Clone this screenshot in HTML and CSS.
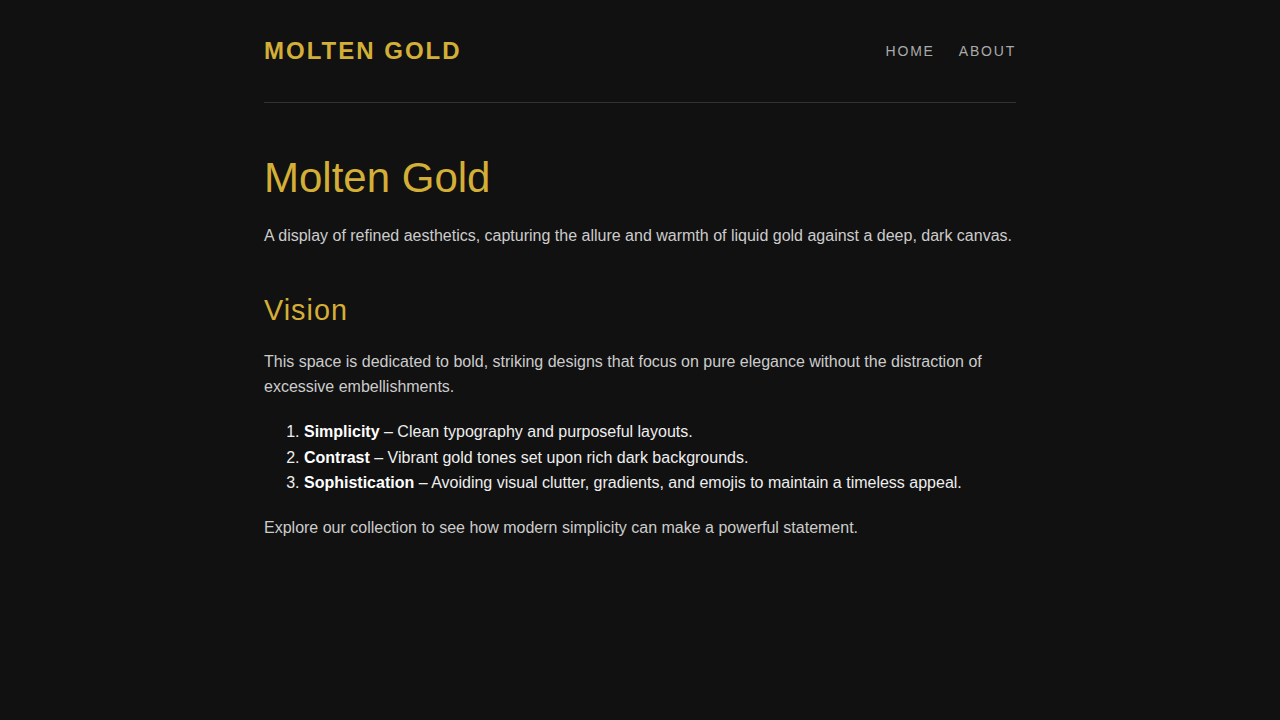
FILE: index.html
```html
<!DOCTYPE html>
<html lang="en">
  <head>
    <meta charset="UTF-8" />
    <title>Molten Gold</title>
    <link rel="stylesheet" href="styles.css">
  </head>
  <body>
    <div class="container">
      <header class="header">
        <div class="logo">MOLTEN GOLD</div>
        <nav class="nav">
          <a href="#">Home</a>
          <a href="#">About</a>
        </nav>
      </header>

      <main class="content">
        <h1>Molten Gold</h1>
        <p>A display of refined aesthetics, capturing the allure and warmth of liquid gold against a deep, dark canvas.</p>

        <h2>Vision</h2>
        <p>This space is dedicated to bold, striking designs that focus on pure elegance without the distraction of excessive embellishments.</p>

        <ol>
          <li><strong>Simplicity</strong> – Clean typography and purposeful layouts.</li>
          <li><strong>Contrast</strong> – Vibrant gold tones set upon rich dark backgrounds.</li>
          <li><strong>Sophistication</strong> – Avoiding visual clutter, gradients, and emojis to maintain a timeless appeal.</li>
        </ol>

        <p>Explore our collection to see how modern simplicity can make a powerful statement.</p>
      </main>
    </div>
  </body>
</html>
```

FILE: styles.css
```css
body {
  margin: 0;
  font-family: "Liberation Sans", Arial, sans-serif;
  font-size: 16px;
  line-height: 1.6;
  background: #111111;
  color: #cccccc;
}

.container {
  max-width: 752px;
  margin: 0 auto;
}

.header {
  display: flex;
  justify-content: space-between;
  align-items: center;
  height: 30px;
  padding: 36px 0;
  border-bottom: 1px solid #333333;
}

.logo {
  color: #d4af37;
  font-size: 24px;
  font-weight: bold;
  letter-spacing: 2px;
  line-height: 30px;
}

.nav {
  display: flex;
  gap: 24px;
}

.nav a {
  color: #aaaaaa;
  text-decoration: none;
  text-transform: uppercase;
  font-size: 14px;
  letter-spacing: 1.8px;
}

.nav a:hover {
  color: #d4af37;
}

.content {
  padding-top: 50px;
}

h1,
h2 {
  color: #d4af37;
  font-weight: normal;
  line-height: 1.2;
}

h1 {
  font-size: 42px;
  margin: 0 0 20px;
}

h2 {
  font-size: 28.8px;
  letter-spacing: 1px;
  margin: 44px 0 21px;
}

p {
  margin: 0 0 19.2px;
}

ol {
  margin: 0 0 19.2px;
  padding-left: 40px;
  color: #eeeeee;
}

strong {
  color: #ffffff;
}
```
